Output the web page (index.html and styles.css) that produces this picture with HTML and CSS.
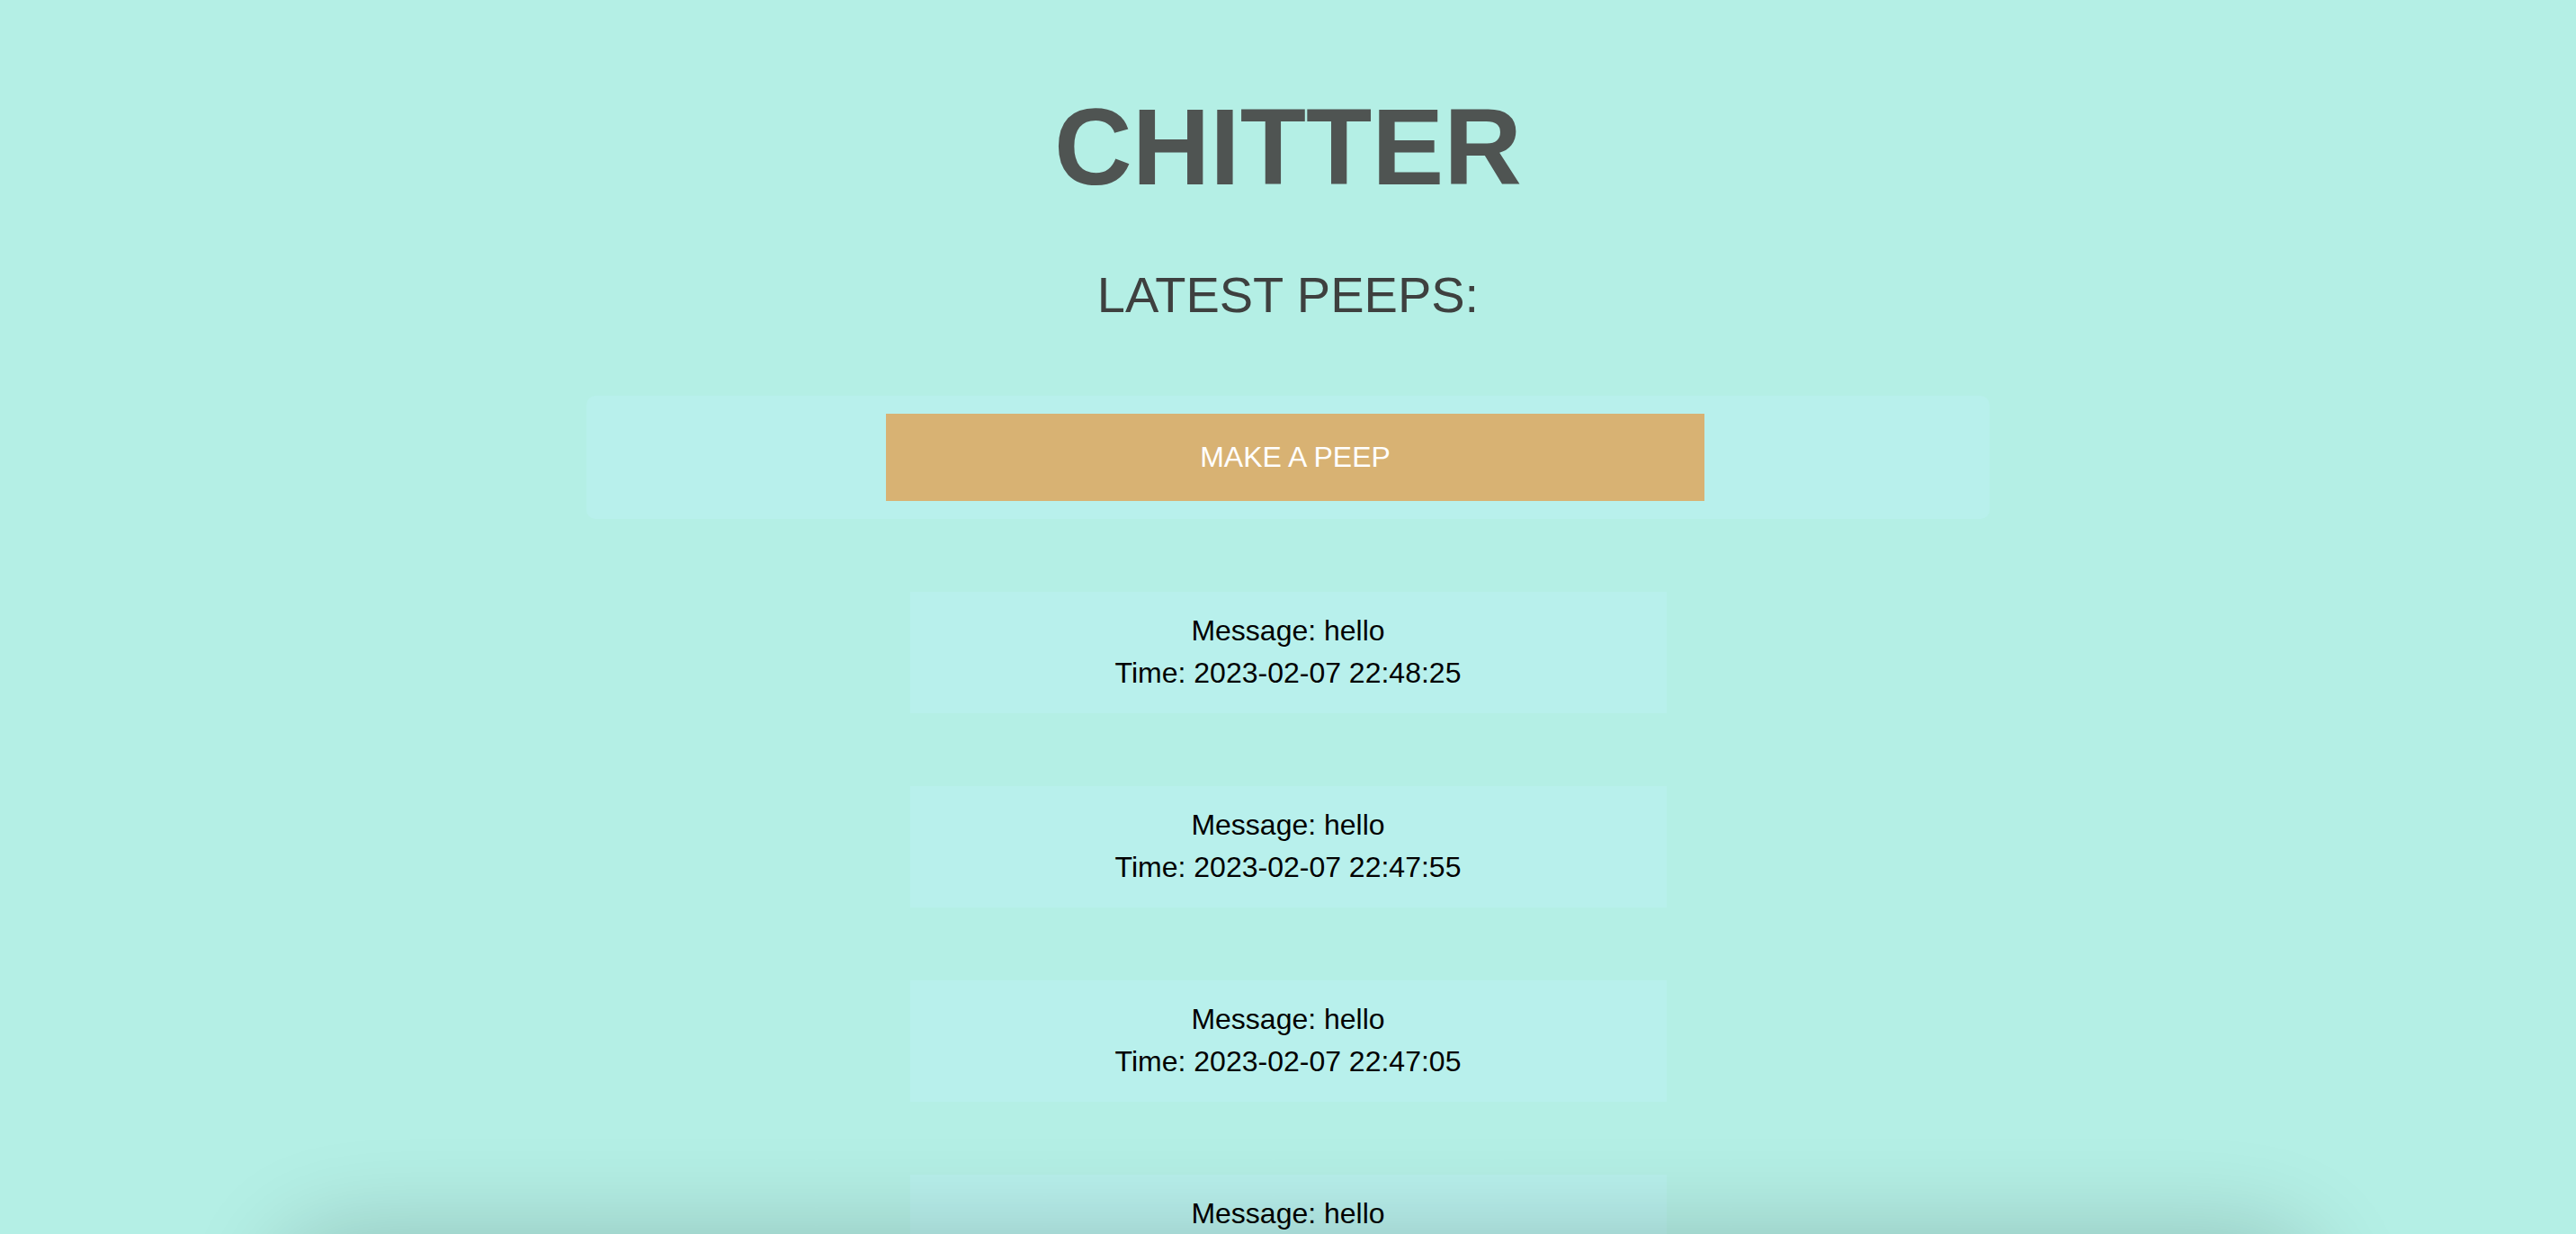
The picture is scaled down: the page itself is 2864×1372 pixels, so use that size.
FILE: index.html
```html
<!DOCTYPE html>
<html lang="en">
<head>
<meta charset="utf-8">
<title>Chitter</title>
<link rel="stylesheet" href="styles.css">
</head>
<body>
<main class="page">
  <h1 class="title">CHITTER</h1>
  <h2 class="subtitle">LATEST PEEPS:</h2>
  <section class="panel">
    <button class="peep-btn" type="button">MAKE A PEEP</button>
  </section>
  <ul class="peeps">
    <li class="peep">
      <p class="line">Message: hello</p>
      <p class="line">Time: 2023-02-07 22:48:25</p>
    </li>
    <li class="peep">
      <p class="line">Message: hello</p>
      <p class="line">Time: 2023-02-07 22:47:55</p>
    </li>
    <li class="peep">
      <p class="line">Message: hello</p>
      <p class="line">Time: 2023-02-07 22:47:05</p>
    </li>
    <li class="peep">
      <p class="line">Message: hello</p>
      <p class="line">Time: 2023-02-07 22:46:40</p>
    </li>
  </ul>
</main>
<div class="bottom-shade"></div>
</body>
</html>
```

FILE: styles.css
```css
html, body {
  margin: 0;
  padding: 0;
}
body {
  background: #b4efe5;
  font-family: "Liberation Sans", Arial, Helvetica, sans-serif;
  overflow: hidden;
  height: 1372px;
}
.page {
  display: flex;
  flex-direction: column;
  align-items: center;
  padding-top: 103px;
}
.title {
  margin: 0;
  font-size: 120px;
  line-height: 120px;
  font-weight: 700;
  color: #4f5452;
}
.subtitle {
  margin: 77px 0 0;
  font-size: 56px;
  line-height: 56px;
  font-weight: 400;
  color: #3e403f;
}
.panel {
  margin-top: 84px;
  width: 1560px;
  box-sizing: border-box;
  padding: 20px 317px 20px 333px;
  background: #b8f0ec;
  border-radius: 10px;
  display: flex;
}
.peep-btn {
  width: 910px;
  height: 97px;
  border: none;
  margin: 0;
  padding: 0;
  background: #d8b273;
  color: #ffffff;
  font-family: "Liberation Sans", Arial, Helvetica, sans-serif;
  font-size: 32px;
}
.peeps {
  list-style: none;
  margin: 81px 0 0;
  padding: 0;
  display: flex;
  flex-direction: column;
  gap: 81px;
}
.peep {
  width: 841px;
  box-sizing: border-box;
  padding: 20px 0 21px;
  background: #b8f0ec;
  text-align: center;
}
.line {
  margin: 0;
  font-size: 32px;
  line-height: 47px;
  color: #000000;
}
.bottom-shade {
  position: fixed;
  left: 310px;
  right: 290px;
  top: 100%;
  height: 200px;
  border-radius: 70px;
  box-shadow: 0 0 110px 0 rgba(0, 0, 0, 0.2);
  pointer-events: none;
}
```
